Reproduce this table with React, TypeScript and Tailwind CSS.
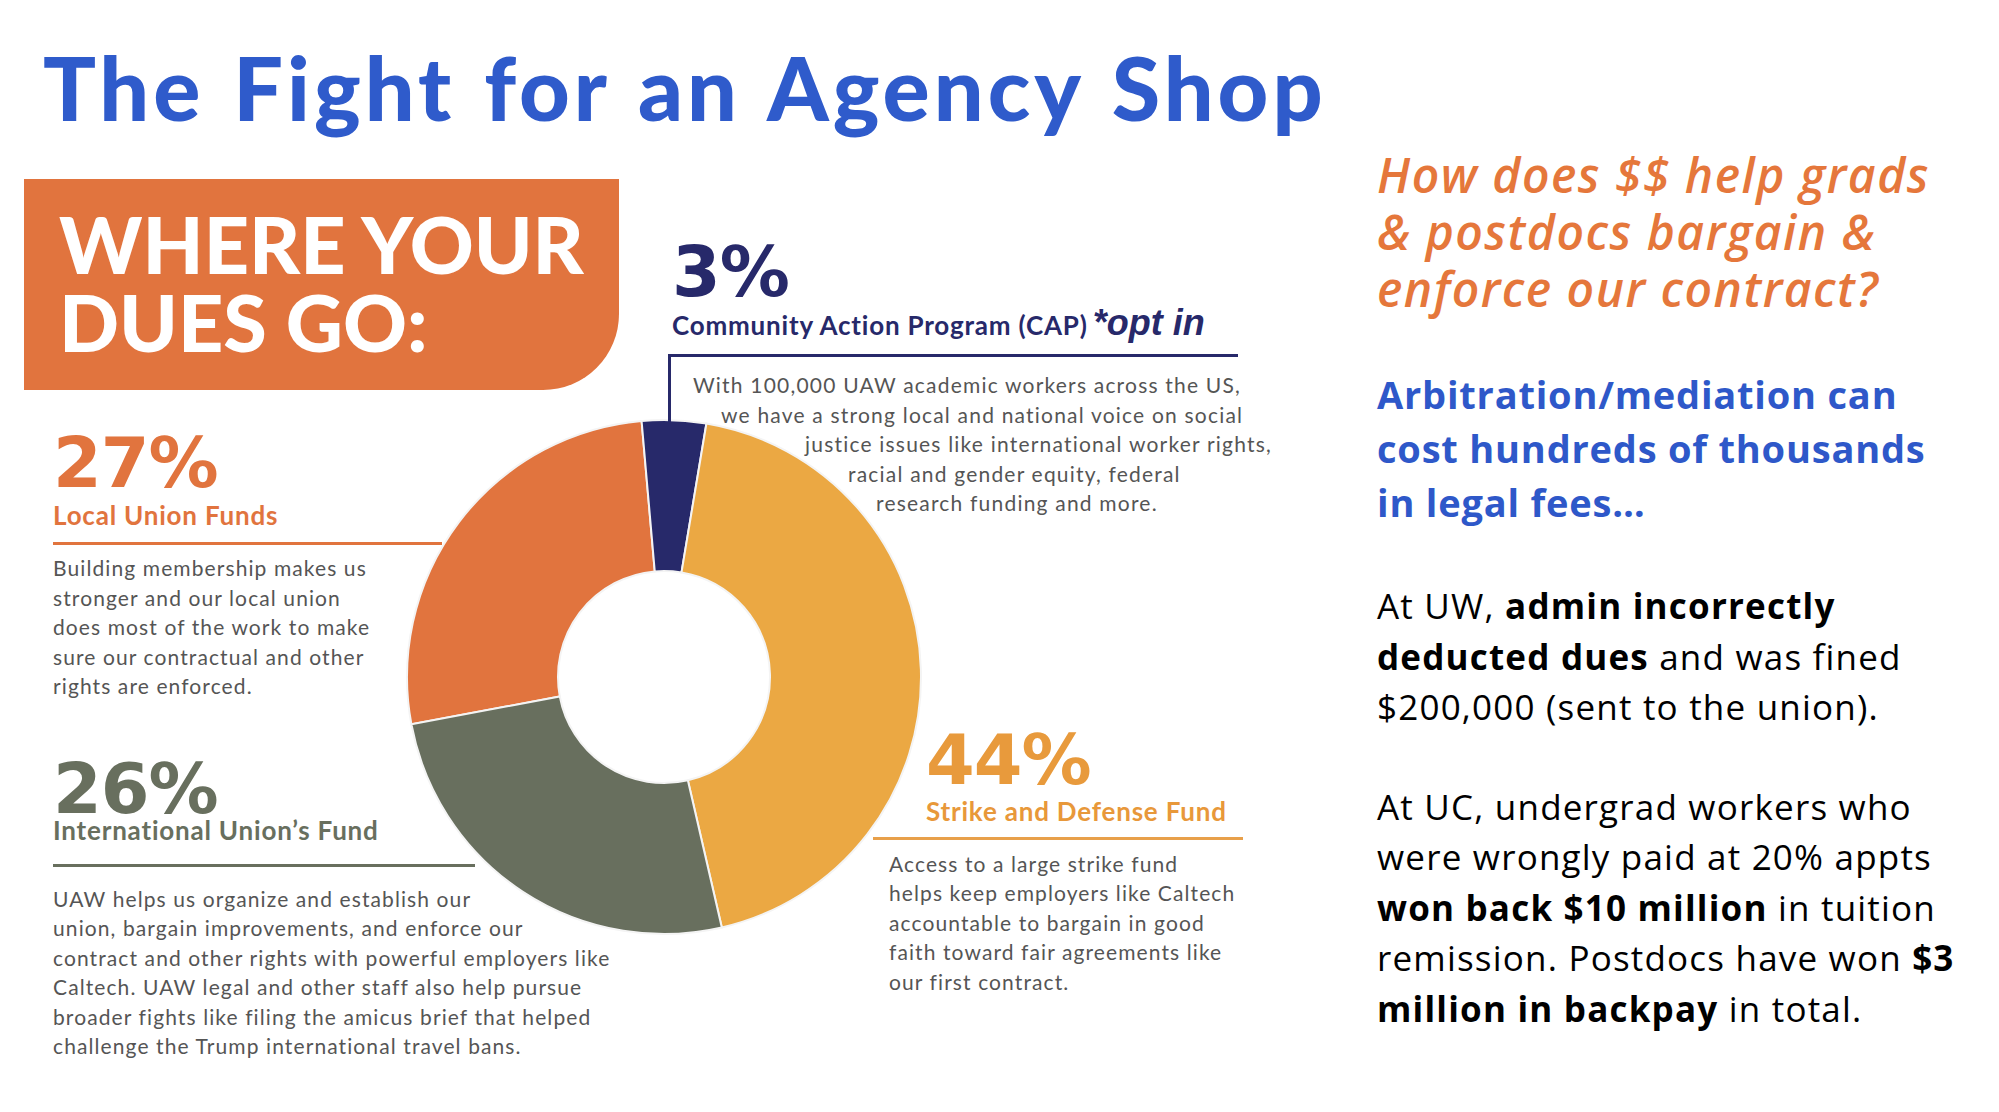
import React from "react";

const CX = 260;
const CY = 260;
const R = 257;
const r = 106;

const SLICES: { from: number; to: number; color: string }[] = [
  { from: 259.4, to: 355, color: "#e1743e" },
  { from: 355, to: 369.5, color: "#27296a" },
  { from: 9.5, to: 167, color: "#eba843" },
  { from: 167, to: 259.4, color: "#686f5e" },
];

function pt(deg: number, rad: number) {
  const a = (deg * Math.PI) / 180;
  return `${(CX + rad * Math.sin(a)).toFixed(2)} ${(CY - rad * Math.cos(a)).toFixed(2)}`;
}

function slicePath(from: number, to: number) {
  const large = to - from > 180 ? 1 : 0;
  return [
    `M ${pt(from, R)}`,
    `A ${R} ${R} 0 ${large} 1 ${pt(to, R)}`,
    `L ${pt(to, r)}`,
    `A ${r} ${r} 0 ${large} 0 ${pt(from, r)}`,
    "Z",
  ].join(" ");
}

function Donut() {
  return (
    <svg width="520" height="520" viewBox="0 0 520 520" className="absolute left-[404px] top-[271px]">
      {SLICES.map((s) => (
        <path key={s.color} d={slicePath(s.from, s.to)} fill={s.color} stroke="#f4f4f4" strokeWidth="2" />
      ))}
    </svg>
  );
}

const LOCAL = [
  "Building membership makes us",
  "stronger and our local union",
  "does most of the work to make",
  "sure our contractual and other",
  "rights are enforced.",
];

const INTL = [
  "UAW helps us organize and establish our",
  "union, bargain improvements, and enforce our",
  "contract and other rights with powerful employers like",
  "Caltech. UAW legal and other staff also help pursue",
  "broader fights like filing the amicus brief that helped",
  "challenge the Trump international travel bans.",
];

const CAP: { text: string; ml: string }[] = [
  { text: "With 100,000 UAW academic workers across the US,", ml: "ml-[25px]" },
  { text: "we have a strong local and national voice on social", ml: "ml-[53px]" },
  { text: "justice issues like international worker rights,", ml: "ml-[137px]" },
  { text: "racial and gender equity, federal", ml: "ml-[180px]" },
  { text: "research funding and more.", ml: "ml-[208px]" },
];

const STRIKE = [
  "Access to a large strike fund",
  "helps keep employers like Caltech",
  "accountable to bargain in good",
  "faith toward fair agreements like",
  "our first contract.",
];

// big percentages share one face; the 56px line box keeps them off the label below
const pct = "font-['DejaVu_Sans',sans-serif] font-bold text-[70px] leading-[56px] tracking-[-1px]";
const label = "text-[26px] leading-none font-bold tracking-[0.8px] whitespace-nowrap";

function Lines({ lines, className }: { lines: string[]; className?: string }) {
  return (
    <div className={`text-[21px] leading-[29.5px] tracking-[1.1px] text-[#555555] whitespace-nowrap ${className ?? ""}`}>
      {lines.map((l) => (
        <div key={l}>{l}</div>
      ))}
    </div>
  );
}

export default function App() {
  return (
    <div className="w-[1999px] h-[1112px] bg-white overflow-hidden font-['Lato',sans-serif]">
      <h1 className="pl-[43px] pt-[43px] h-[146px] text-[88px] leading-none font-black tracking-[4px] [word-spacing:4px] text-[#2f5bcb] whitespace-nowrap">
        The Fight for an Agency Shop
      </h1>

      <div className="flex">
        {/* infographic */}
        <div className="relative w-[1340px] h-[966px] flex">
          <Donut />

          <div className="relative ml-[24px] w-[595px] flex flex-col">
            <div className="mt-[33px] h-[211px] bg-[#e1743e] rounded-br-[76px] pl-[35px] pt-[26px] text-white font-black text-[79px] leading-[78px] whitespace-nowrap">
              <div>WHERE YOUR</div>
              <div>DUES GO:</div>
            </div>

            <div className="pl-[29px]">
              <div className={`mt-[45px] text-[#e1743e] ${pct}`}>27%</div>
              <div className={`mt-[11px] text-[#e1743e] ${label}`}>Local Union Funds</div>
              <div className="mt-[14px] w-[389px] h-[3px] bg-[#e1743e]" />
              <Lines lines={LOCAL} className="mt-[8px]" />

              <div className={`mt-[60px] text-[#686f5e] ${pct}`}>26%</div>
              <div className={`text-[#686f5e] ${label}`}>International Union’s Fund</div>
              <div className="mt-[21px] w-[422px] h-[3px] bg-[#686f5e]" />
              <Lines lines={INTL} className="mt-[17px]" />
            </div>
          </div>

          <div className="relative ml-[49px] flex flex-col">
            <div className={`mt-[98px] pl-[4px] text-[#27296a] ${pct}`}>3%</div>
            <div className="mt-[5px] pl-[4px] flex items-baseline gap-[5px] whitespace-nowrap text-[#27296a]">
              <span className={label}>Community Action Program (CAP)</span>
              <span className="font-['Liberation_Sans',sans-serif] italic font-bold text-[36px] leading-none">*opt in</span>
            </div>
            <div className="relative mt-[13px] w-[570px] border-t-[3px] border-[#27296a]">
              <div className="absolute left-0 top-0 w-[3px] h-[72px] bg-[#27296a]" />
              <div className="pt-[13px] text-[21px] leading-[29.5px] tracking-[1.2px] text-[#555555] whitespace-nowrap">
                {CAP.map((c) => (
                  <div key={c.text} className={c.ml}>
                    {c.text}
                  </div>
                ))}
              </div>
            </div>

            <div className="ml-[205px] mt-[214px] w-[370px]">
              <div className={`pl-[53px] text-[#e89a3c] ${pct}`}>44%</div>
              <div className={`pl-[53px] mt-[10px] text-[#e8983a] ${label}`}>Strike and Defense Fund</div>
              <div className="mt-[13px] h-[3px] bg-[#e8a04a]" />
              <Lines lines={STRIKE} className="mt-[9px] pl-[16px]" />
            </div>
          </div>
        </div>

        {/* right column */}
        <div className="ml-[37px] w-[620px] whitespace-nowrap font-['Open_Sans',sans-serif]">
          <p className="text-[48px] leading-[57px] italic font-semibold tracking-[1.5px] text-[#e5773b]">
            How does $$ help grads
            <br />& postdocs bargain &
            <br />
            enforce our contract?
          </p>
          <p className="mt-[50px] text-[38px] leading-[54px] font-bold tracking-[0.8px] text-[#2e58c9]">
            Arbitration/mediation can
            <br />
            cost hundreds of thousands
            <br />
            in legal fees…
          </p>
          <p className="mt-[52px] text-[35px] leading-[50.5px] tracking-[1.2px] text-black">
            At UW, <b>admin incorrectly</b>
            <br />
            <b>deducted dues</b> and was fined
            <br />
            $200,000 (sent to the union).
          </p>
          <p className="mt-[49px] text-[35px] leading-[50.5px] tracking-[1.2px] text-black">
            At UC, undergrad workers who
            <br />
            were wrongly paid at 20% appts
            <br />
            <b>won back $10 million</b> in tuition
            <br />
            remission. Postdocs have won <b>$3</b>
            <br />
            <b>million in backpay</b> in total.
          </p>
        </div>
      </div>
    </div>
  );
}
